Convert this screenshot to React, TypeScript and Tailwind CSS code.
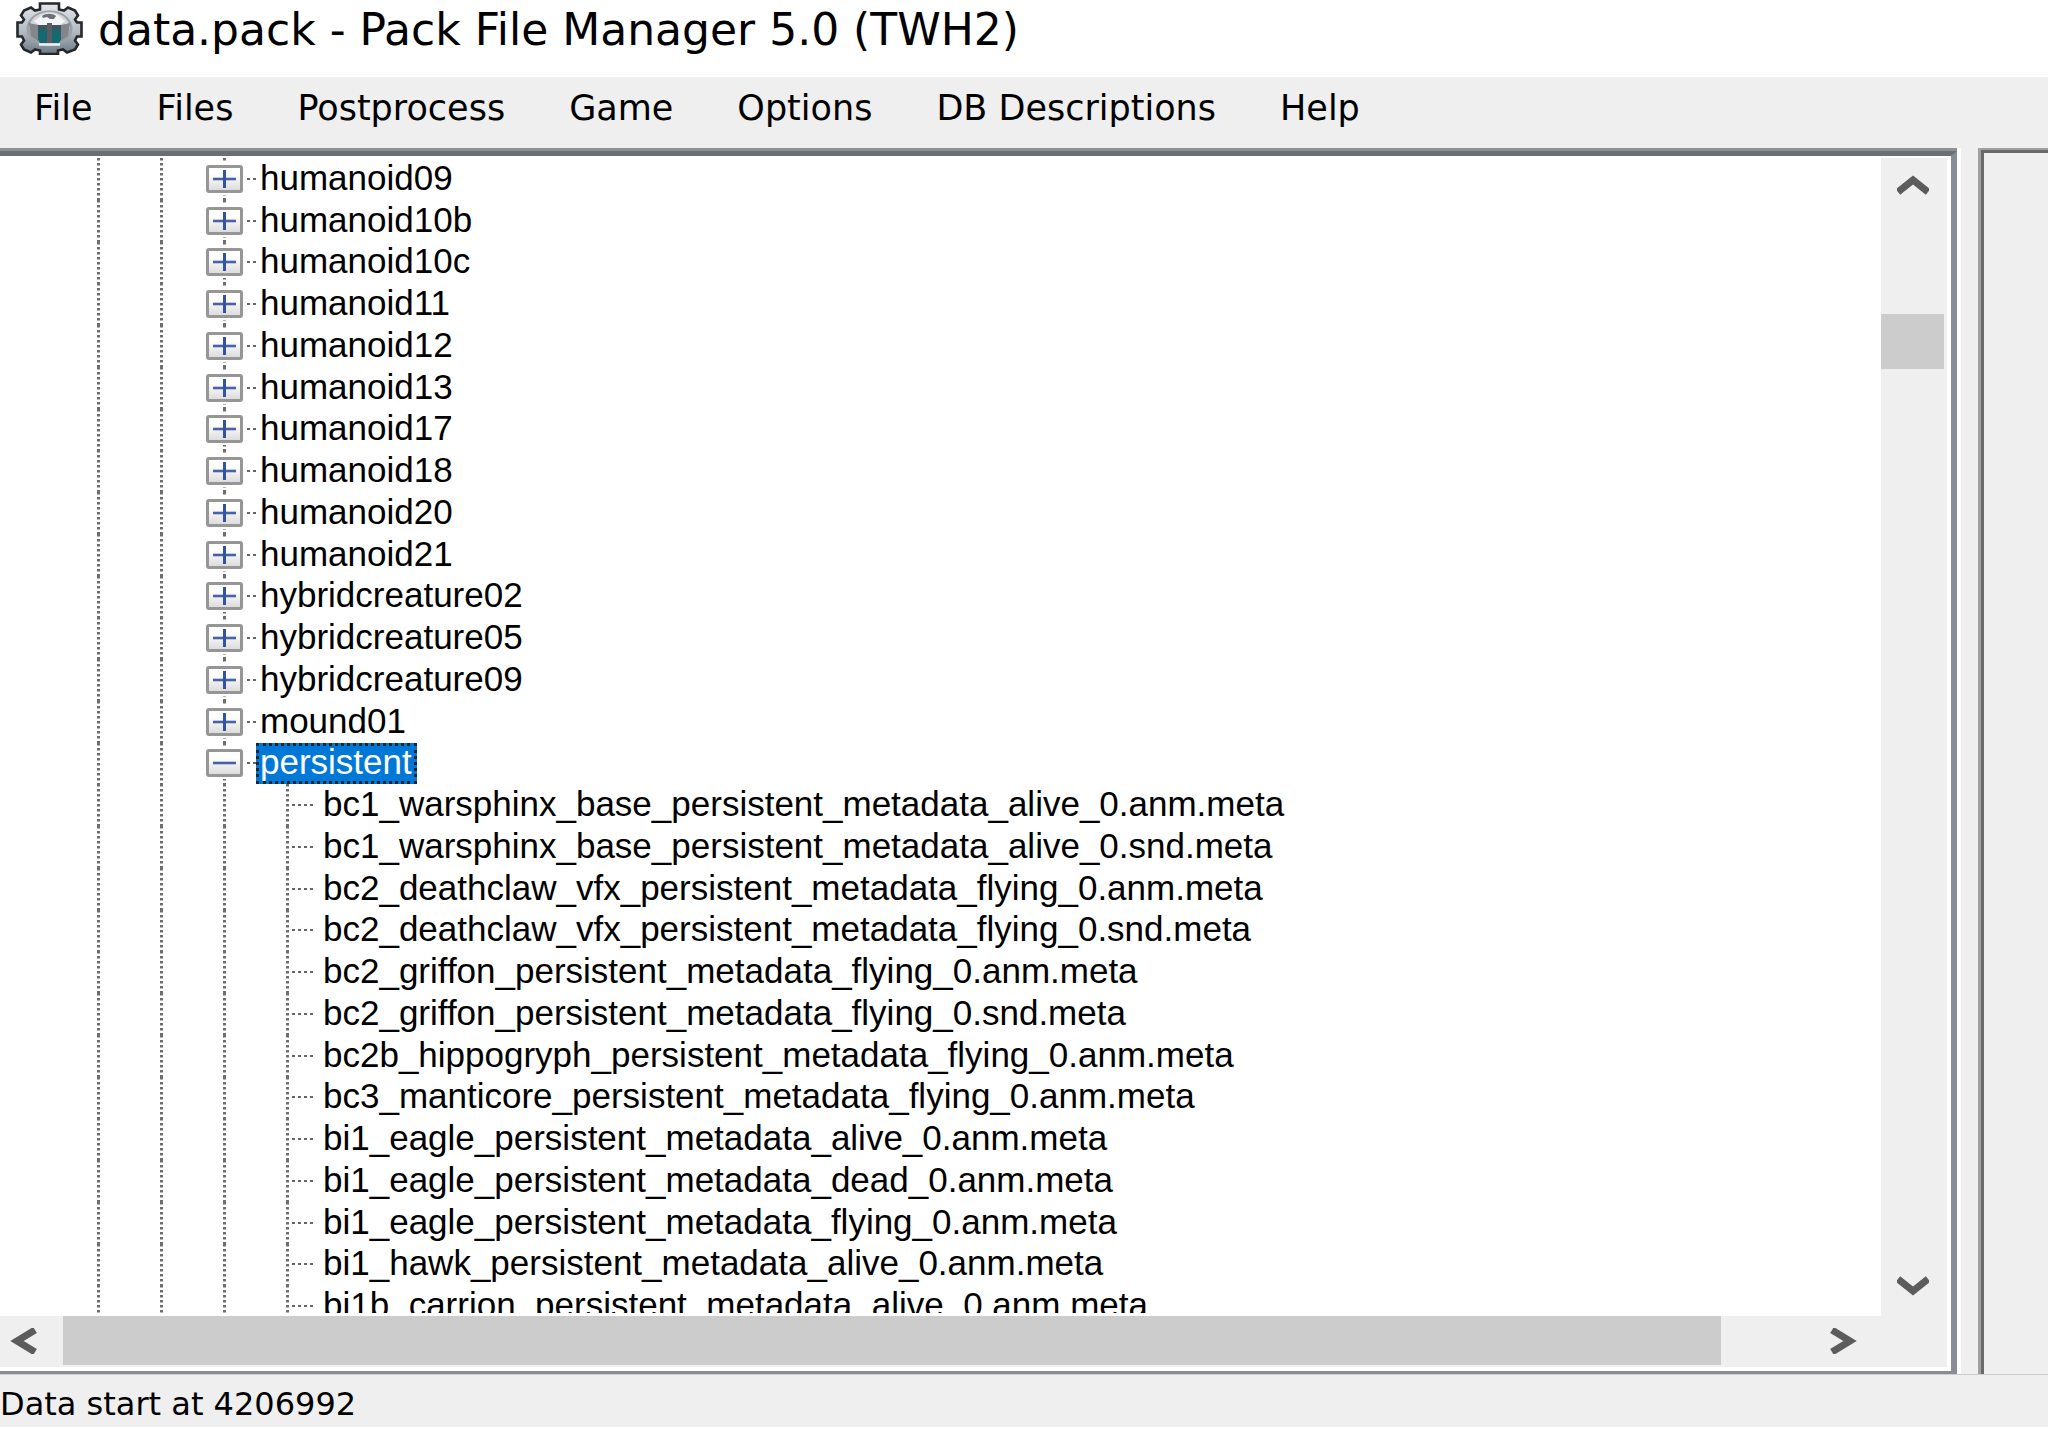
import React, { useState } from 'react';

const menuItems = ['File', 'Files', 'Postprocess', 'Game', 'Options', 'DB Descriptions', 'Help'];

const folders = [
  'humanoid09',
  'humanoid10b',
  'humanoid10c',
  'humanoid11',
  'humanoid12',
  'humanoid13',
  'humanoid17',
  'humanoid18',
  'humanoid20',
  'humanoid21',
  'hybridcreature02',
  'hybridcreature05',
  'hybridcreature09',
  'mound01',
  'persistent'
];

const files = [
  'bc1_warsphinx_base_persistent_metadata_alive_0.anm.meta',
  'bc1_warsphinx_base_persistent_metadata_alive_0.snd.meta',
  'bc2_deathclaw_vfx_persistent_metadata_flying_0.anm.meta',
  'bc2_deathclaw_vfx_persistent_metadata_flying_0.snd.meta',
  'bc2_griffon_persistent_metadata_flying_0.anm.meta',
  'bc2_griffon_persistent_metadata_flying_0.snd.meta',
  'bc2b_hippogryph_persistent_metadata_flying_0.anm.meta',
  'bc3_manticore_persistent_metadata_flying_0.anm.meta',
  'bi1_eagle_persistent_metadata_alive_0.anm.meta',
  'bi1_eagle_persistent_metadata_dead_0.anm.meta',
  'bi1_eagle_persistent_metadata_flying_0.anm.meta',
  'bi1_hawk_persistent_metadata_alive_0.anm.meta',
  'bi1b_carrion_persistent_metadata_alive_0.anm.meta'
];

const AppIcon = () => (
  <svg viewBox="0 0 67 53" className="w-[67px] h-[53px] shrink-0" aria-hidden="true">
    <defs>
      <linearGradient id="metal" x1="0" y1="0" x2="0" y2="1">
        <stop offset="0" stopColor="#e4e7ea" />
        <stop offset="0.55" stopColor="#b4bbc3" />
        <stop offset="1" stopColor="#6c7883" />
      </linearGradient>
    </defs>
    <path
      d="M24 1.500h19v6l5 1 4-3 7 3 3 5-3 4 2 3h4.500v14h-4.500l-2 4 3 4-3 5-8 3-4-3-5 1v3.500H24v-3.500l-5-1-4 3-7-3-3-5 3-4-2-4H1.500V20.500H6l2-3-3-4 3-5 7-3 4 3 5-1z"
      fill="url(#metal)"
      stroke="#25282c"
      strokeWidth="2.6"
    />
    <ellipse cx="33.5" cy="26.5" rx="23" ry="18" fill="#9aa1a8" />
    <ellipse cx="33.5" cy="25.5" rx="20" ry="15.5" fill="#d3d6da" />
    <path d="M24 15c2-5 17-5 20 0l5 4-5 4H23l-5-4z" fill="#f4f4f6" />
    <path d="M26 14c3-3 11-3 14 0l-2 3h-4l-3-2-4 1z" fill="#6d7077" />
    <path d="M13 21l9 2v16l-7-5zM54 21l-9 2v16l7-5z" fill="#85858c" />
    <path d="M22 23h9v18h-7l-2-3zM36 23h9v15l-2 3h-7z" fill="#146a70" />
    <path d="M31 21h5v20h-5z" fill="#5b5d63" />
    <path d="M22 23h9v5h-9zM36 23h9v5h-9z" fill="#3c5560" />
    <path d="M23 42.500h21" stroke="#eceef0" strokeWidth="2.5" />
  </svg>
);

const Chevron = ({ points }: { points: string }) => (
  <svg viewBox="0 0 32 26" className="w-[32px] h-[26px]" fill="none" stroke="#5c5c5c" strokeWidth="7" aria-hidden="true">
    <polyline points={points} />
  </svg>
);

// Dotted vertical guide, one per tree level
const Guide = () => (
  <span className="w-[63px] shrink-0 flex justify-center">
    <span className="w-[3px] h-full bg-[repeating-linear-gradient(to_bottom,#6e6e6e_0px,#6e6e6e_2px,#fff_3px,#fff_5px)]" />
  </span>
);

const Toggle = ({ open }: { open: boolean }) => (
  <span className="w-[63px] shrink-0 flex flex-col items-center relative">
    <span className="w-[3px] h-full bg-[repeating-linear-gradient(to_bottom,#6e6e6e_0px,#6e6e6e_2px,#fff_3px,#fff_5px)]" />
    <span className="absolute inset-y-0 right-0 w-[12px] flex items-center">
      <span className="h-[2px] w-full bg-[repeating-linear-gradient(to_right,#fff_0px,#fff_3px,#666_3px,#666_6px)]" />
    </span>
    <span className="absolute inset-0 flex items-center justify-center">
      <span className="flex bg-white py-[2px]">
        <svg viewBox="0 0 37 28" className="w-[37px] h-[28px]" aria-hidden="true">
          <defs>
            <linearGradient id="face" x1="0" y1="0" x2="0" y2="1">
              <stop offset="0.3" stopColor="#ffffff" />
              <stop offset="1" stopColor="#d9d9d9" />
            </linearGradient>
          </defs>
          <rect x="1.5" y="1.5" width="34" height="25" rx="1.5" fill="url(#face)" stroke="#969696" strokeWidth="3" />
          <path d="M7 14h23" stroke="#4762a8" strokeWidth="2.6" />
          {!open && <path d="M18.5 5v18" stroke="#33529f" strokeWidth="3" />}
        </svg>
      </span>
    </span>
  </span>
);

const Branch = () => (
  <span className="w-[63px] shrink-0 flex justify-center relative">
    <span className="w-[3px] h-full bg-[repeating-linear-gradient(to_bottom,#6e6e6e_0px,#6e6e6e_2px,#fff_3px,#fff_5px)]" />
    <span className="absolute inset-y-0 right-0 w-[30px] flex items-center">
      <span className="h-[2px] w-[27px] bg-[repeating-linear-gradient(to_right,#fff_0px,#fff_3px,#666_3px,#666_6px)]" />
    </span>
  </span>
);

const App = () => {
  const [selected, setSelected] = useState('persistent');

  const labelClass = (name: string) =>
    `h-full flex items-center pl-1 pr-[5px] pb-[3px] whitespace-pre ${
      selected === name
        ? 'bg-[#0078d7] text-white outline-3 -outline-offset-3 outline-dotted outline-[#20242c]'
        : 'text-black'
    }`;

  return (
    <div className="h-screen flex flex-col bg-white pb-[2px] overflow-hidden text-black">
      {/* Title Bar */}
      <header className="h-[77px] shrink-0 flex items-center gap-[15px] pl-4 pb-[20px]">
        <AppIcon />
        <h1 className="pt-[3px] text-[44px] leading-none whitespace-nowrap font-['DejaVu_Sans',sans-serif]">
          data.pack - Pack File Manager 5.0 (TWH2)
        </h1>
      </header>

      {/* Menu */}
      <nav className="h-[71px] shrink-0 flex items-center bg-[#efefef] pl-[2px] pb-[8px] text-[35px] font-['DejaVu_Sans',sans-serif]">
        {menuItems.map((item) => (
          <button key={item} className="px-8 whitespace-nowrap hover:bg-[#d8e6f2]">
            {item}
          </button>
        ))}
      </nav>

      <main className="flex-1 min-h-0 flex bg-[#efefef]">
        {/* Tree panel */}
        <section className="flex-1 min-w-0 flex border-r-4 border-white">
          <div className="flex-1 min-w-0 flex flex-col border-t-3 border-[#8f8f8f]">
            <div className="flex-1 min-h-0 flex flex-col border-t-5 border-r-6 border-b-3 border-t-[#6c6e75] border-r-[#888d95] border-b-[#888d95]">
              <div className="flex-1 min-h-0 flex flex-col border-r-4 border-b-4 border-white">
                <div className="flex-1 min-h-0 flex">
                  <div className="flex-1 min-w-0 flex flex-col bg-white border-t-2 border-b-3 border-white overflow-hidden">
                    <ul className="flex-1 flex flex-col -mb-[14px] pl-[67px] text-[35px] leading-none font-['Liberation_Sans',Arial,sans-serif]">
                      {folders.map((name) => (
                        <li key={name} className="flex-1 flex">
                          <button className="flex text-left" onClick={() => setSelected(name)}>
                            <Guide />
                            <Guide />
                            <Toggle open={name === 'persistent'} />
                            <span className={labelClass(name)}>{name}</span>
                          </button>
                        </li>
                      ))}
                      {files.map((name) => (
                        <li key={name} className="flex-1 flex">
                          <button className="flex text-left" onClick={() => setSelected(name)}>
                            <Guide />
                            <Guide />
                            <Guide />
                            <Branch />
                            <span className={labelClass(name)}>{name}</span>
                          </button>
                        </li>
                      ))}
                    </ul>
                  </div>

                  {/* Vertical scrollbar */}
                  <div className="w-[66px] shrink-0 flex flex-col bg-[#efefef] border-t-2 border-white">
                    <button aria-label="Scroll up" className="h-[53px] w-[63px] flex justify-center items-center">
                      <Chevron points="1,20 16,8 31,20" />
                    </button>
                    <div className="flex-1 pt-[103px]">
                      <div className="w-[63px] h-[55px] bg-[#cccccc]" />
                    </div>
                    <button aria-label="Scroll down" className="h-[60px] w-[63px] flex justify-center items-center">
                      <Chevron points="1,6 16,18 31,6" />
                    </button>
                  </div>
                </div>

                {/* Horizontal scrollbar */}
                <div className="h-[51px] shrink-0 flex pr-[66px] bg-[#efefef]">
                  <button aria-label="Scroll left" className="w-[63px] h-[49px] shrink-0 pl-[9px] flex items-center">
                    <Chevron points="26,2 8,13 26,24" />
                  </button>
                  <div className="flex-1 pr-[97px]">
                    <div className="h-[49px] bg-[#cccccc]" />
                  </div>
                  <button aria-label="Scroll right" className="w-[63px] h-[49px] shrink-0 pr-[15px] flex items-center justify-center">
                    <Chevron points="6,2 24,13 6,24" />
                  </button>
                </div>
              </div>
            </div>
          </div>
        </section>

        {/* Detail panel */}
        <section className="w-[70px] ml-[17px] shrink-0 flex border-t-2 border-l-3 border-[#a0a0a0]">
          <div className="flex-1 border-t-3 border-l-3 border-[#696969]" />
        </section>
      </main>

      {/* Status Bar */}
      <footer className="h-[53px] shrink-0 flex items-center bg-[#efefef] border-t border-[#cccccc] pt-[6px] text-[32px] leading-none font-['DejaVu_Sans',sans-serif]">
        <p>Data start at 4206992</p>
      </footer>
    </div>
  );
};

export default App;
